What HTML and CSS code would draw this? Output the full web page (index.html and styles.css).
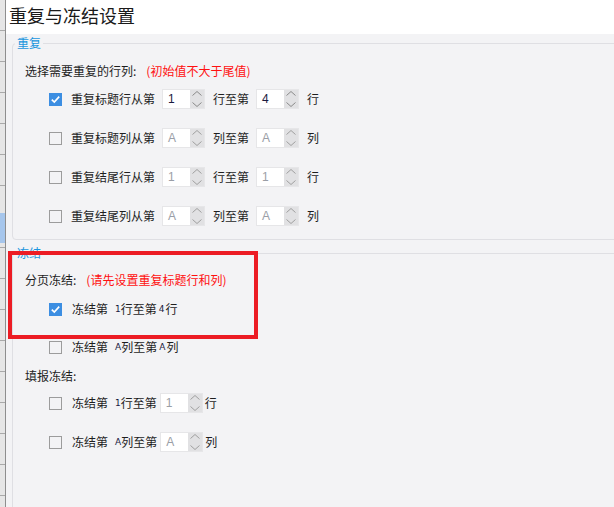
FILE: index.html
```html
<!DOCTYPE html>
<html lang="zh-CN">
<head>
  <meta charset="utf-8">
  <title>重复与冻结设置</title>
  <link rel="stylesheet" href="styles.css">
</head>
<body>

<div class="sheet">
  <div class="sheet-sel"></div>
</div>

<div class="dialog">
  <div class="titlebar">重复与冻结设置</div>

  <div class="content">
    <fieldset class="group group-repeat">
      <legend>重复</legend>
      <div class="hint">选择需要重复的行列:<span class="warn">(初始值不大于尾值)</span></div>

      <div class="row">
        <span class="check on"><svg width="13" height="13" viewBox="0 0 13 13"><path d="M2.8 6.6 L5.3 9.1 L10.2 3.6" fill="none" stroke="#fff" stroke-width="1.6"/></svg></span>
        <span class="lbl">重复标题行从第</span>
        <span class="spin active"><span class="val">1</span><span class="arrows"><svg width="14" height="18" viewBox="0 0 14 18"><path d="M2.5 5.5 L7 1.5 L11.5 5.5 M2.5 12.5 L7 16.5 L11.5 12.5" fill="none" stroke="#8a8a8a"/></svg></span></span>
        <span class="lbl">行至第</span>
        <span class="spin active"><span class="val">4</span><span class="arrows"><svg width="14" height="18" viewBox="0 0 14 18"><path d="M2.5 5.5 L7 1.5 L11.5 5.5 M2.5 12.5 L7 16.5 L11.5 12.5" fill="none" stroke="#8a8a8a"/></svg></span></span>
        <span class="lbl">行</span>
      </div>

      <div class="row">
        <span class="check"></span>
        <span class="lbl">重复标题列从第</span>
        <span class="spin"><span class="val">A</span><span class="arrows"><svg width="14" height="18" viewBox="0 0 14 18"><path d="M2.5 5.5 L7 1.5 L11.5 5.5 M2.5 12.5 L7 16.5 L11.5 12.5" fill="none" stroke="#a0a0a0"/></svg></span></span>
        <span class="lbl">列至第</span>
        <span class="spin"><span class="val">A</span><span class="arrows"><svg width="14" height="18" viewBox="0 0 14 18"><path d="M2.5 5.5 L7 1.5 L11.5 5.5 M2.5 12.5 L7 16.5 L11.5 12.5" fill="none" stroke="#a0a0a0"/></svg></span></span>
        <span class="lbl">列</span>
      </div>

      <div class="row">
        <span class="check"></span>
        <span class="lbl">重复结尾行从第</span>
        <span class="spin"><span class="val">1</span><span class="arrows"><svg width="14" height="18" viewBox="0 0 14 18"><path d="M2.5 5.5 L7 1.5 L11.5 5.5 M2.5 12.5 L7 16.5 L11.5 12.5" fill="none" stroke="#a0a0a0"/></svg></span></span>
        <span class="lbl">行至第</span>
        <span class="spin"><span class="val">1</span><span class="arrows"><svg width="14" height="18" viewBox="0 0 14 18"><path d="M2.5 5.5 L7 1.5 L11.5 5.5 M2.5 12.5 L7 16.5 L11.5 12.5" fill="none" stroke="#a0a0a0"/></svg></span></span>
        <span class="lbl">行</span>
      </div>

      <div class="row">
        <span class="check"></span>
        <span class="lbl">重复结尾列从第</span>
        <span class="spin"><span class="val">A</span><span class="arrows"><svg width="14" height="18" viewBox="0 0 14 18"><path d="M2.5 5.5 L7 1.5 L11.5 5.5 M2.5 12.5 L7 16.5 L11.5 12.5" fill="none" stroke="#a0a0a0"/></svg></span></span>
        <span class="lbl">列至第</span>
        <span class="spin"><span class="val">A</span><span class="arrows"><svg width="14" height="18" viewBox="0 0 14 18"><path d="M2.5 5.5 L7 1.5 L11.5 5.5 M2.5 12.5 L7 16.5 L11.5 12.5" fill="none" stroke="#a0a0a0"/></svg></span></span>
        <span class="lbl">列</span>
      </div>
    </fieldset>

    <fieldset class="group group-freeze">
      <legend>冻结</legend>
      <div class="hint">分页冻结:<span class="warn">(请先设置重复标题行和列)</span></div>

      <div class="row frow first">
        <span class="check on"><svg width="13" height="13" viewBox="0 0 13 13"><path d="M2.8 6.6 L5.3 9.1 L10.2 3.6" fill="none" stroke="#fff" stroke-width="1.6"/></svg></span>
        <span class="lbl">冻结第</span><span class="num">1</span><span class="lbl">行至第</span><span class="num tight">4</span><span class="lbl">行</span>
      </div>

      <div class="row frow">
        <span class="check"></span>
        <span class="lbl">冻结第</span><span class="num">A</span><span class="lbl">列至第</span><span class="num tight">A</span><span class="lbl">列</span>
      </div>

      <div class="hint sub">填报冻结:</div>

      <div class="row frow first">
        <span class="check"></span>
        <span class="lbl">冻结第</span><span class="num">1</span><span class="lbl">行至第</span>
        <span class="spin small"><span class="val">1</span><span class="arrows"><svg width="14" height="18" viewBox="0 0 14 18"><path d="M2.5 5.5 L7 1.5 L11.5 5.5 M2.5 12.5 L7 16.5 L11.5 12.5" fill="none" stroke="#a0a0a0"/></svg></span></span>
        <span class="lbl">行</span>
      </div>

      <div class="row frow last">
        <span class="check"></span>
        <span class="lbl">冻结第</span><span class="num">A</span><span class="lbl">列至第</span>
        <span class="spin small"><span class="val">A</span><span class="arrows"><svg width="14" height="18" viewBox="0 0 14 18"><path d="M2.5 5.5 L7 1.5 L11.5 5.5 M2.5 12.5 L7 16.5 L11.5 12.5" fill="none" stroke="#a0a0a0"/></svg></span></span>
        <span class="lbl">列</span>
      </div>
    </fieldset>
  </div>
</div>

<div class="annot"></div>

</body>
</html>
```

FILE: styles.css
```css
html {
  height: 100%;
}
body {
  margin: 0;
  height: 507px;
  overflow: hidden;
  display: flex;
  font-family: "Noto Sans CJK SC", "Microsoft YaHei", sans-serif;
  font-size: 12px;
  color: #1e1e1e;
}

/* spreadsheet peeking out on the left */
.sheet {
  width: 5px;
  position: relative;
  background: repeating-linear-gradient(#e6e6e6 0, #e6e6e6 30px, #a9a9a9 30px, #a9a9a9 31px);
  border-right: 1px solid #8e8e8e;
}
.sheet-sel {
  position: absolute;
  left: 0;
  right: 0;
  top: 213px;
  height: 30px;
  background: #a6c6ec;
}

.dialog {
  flex: 1;
  display: flex;
  flex-direction: column;
  background: #f3f3f5;
}

.titlebar {
  height: 34px;
  background: #fff;
  padding-left: 3px;
  font-size: 18px;
  line-height: 31px;
  color: #1a1a1a;
}

.content {
  flex: 1;
  display: flex;
  flex-direction: column;
  padding-left: 6px;
}

.group {
  margin: 1px -20px 0 0;
  padding: 12px 0 13px 0;
  border: 1px solid #dfdfe3;
  border-radius: 4px;
}
.group legend {
  margin-left: 2px;
  padding: 0 2px;
  line-height: 16px;
  color: #1a96de;
}
.group-freeze {
  flex: 1;
  margin-top: 5px;
  padding-top: 11px;
  padding-bottom: 0;
  border-bottom: none;
  border-radius: 4px 0 0 0;
}

.hint {
  margin-left: 12px;
  line-height: 16px;
  height: 16px;
}
.hint.sub {
  margin-top: 11px;
}
.warn {
  color: #ff1010;
  margin-left: 10px;
}

.row {
  display: flex;
  align-items: center;
  height: 20px;
  margin: 19px 0 0 36px;
  line-height: 16px;
}
.group-repeat .hint + .row {
  margin-top: 10px;
}
.frow {
  margin-top: 18px;
}
.frow.first {
  margin-top: 11px;
}
.frow.last {
  margin-top: 19px;
}
.group-freeze .sub + .row {
  margin-top: 9px;
}

.check {
  width: 13px;
  height: 13px;
  box-sizing: border-box;
  border: 1px solid #9c9c9c;
  margin-right: 9px;
  display: flex;
}
.check.on {
  border: none;
  background: #3c8ee2;
}
.frow .check {
  margin-right: 10px;
}

.spin {
  display: flex;
  width: 43px;
  height: 20px;
  box-sizing: border-box;
  border: 1px solid #e6e6e8;
  background: #fff;
  margin: 0 8px 0 7px;
}
.spin .val {
  flex: 1;
  padding-left: 5px;
  font-family: "Liberation Sans", sans-serif;
  font-size: 12px;
  line-height: 18px;
  color: #9a9ea6;
}
.spin.active .val {
  color: #1a1a40;
}
.spin .arrows {
  width: 14px;
  background: #e1e1e3;
}
.spin.small {
  margin: 0 2px 0 3px;
}

.num {
  font-family: "DejaVu Sans", sans-serif;
  font-size: 9px;
  margin: 0 0 0 7px;
  color: #1a1a40;
}
.num.tight {
  margin-left: 2px;
  margin-right: 1px;
}

/* red annotation frame drawn over the dialog */
.annot {
  position: absolute;
  left: 8px;
  top: 251px;
  width: 242px;
  height: 80px;
  border: 4px solid #ec1c24;
}
```
